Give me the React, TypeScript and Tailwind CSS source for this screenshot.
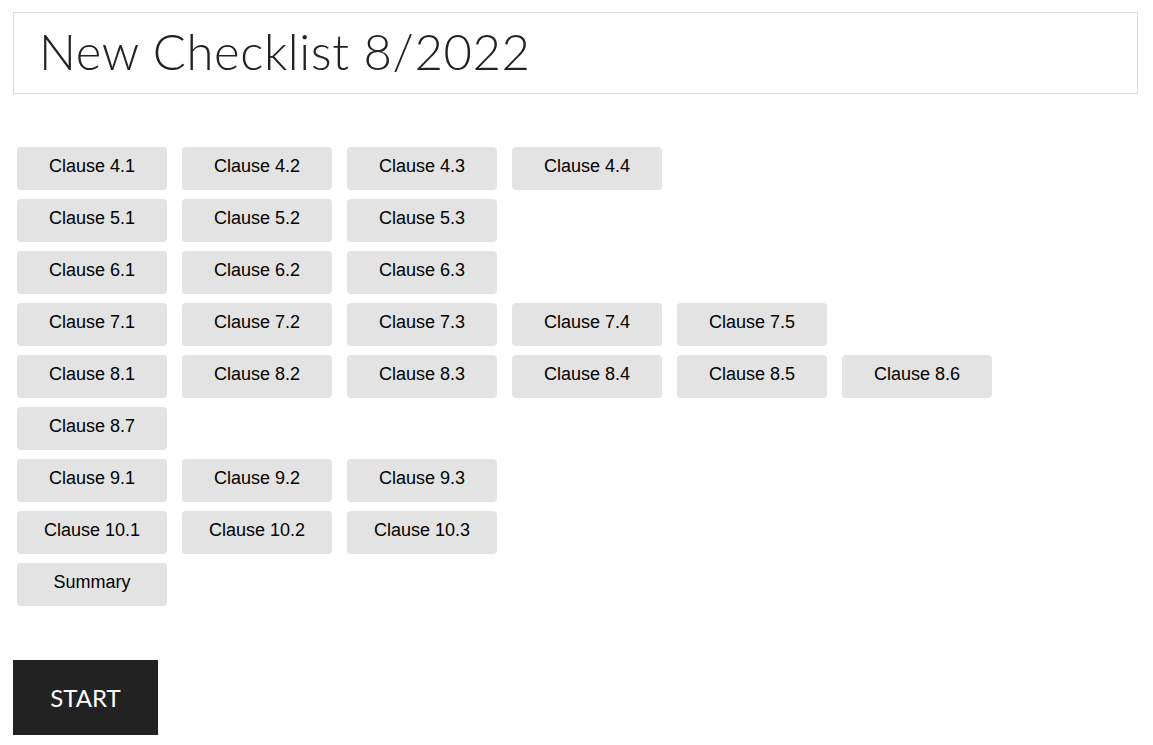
import React from "react";

const rows: string[][] = [
  ["Clause 4.1", "Clause 4.2", "Clause 4.3", "Clause 4.4"],
  ["Clause 5.1", "Clause 5.2", "Clause 5.3"],
  ["Clause 6.1", "Clause 6.2", "Clause 6.3"],
  ["Clause 7.1", "Clause 7.2", "Clause 7.3", "Clause 7.4", "Clause 7.5"],
  ["Clause 8.1", "Clause 8.2", "Clause 8.3", "Clause 8.4", "Clause 8.5", "Clause 8.6", "Clause 8.7"],
  ["Clause 9.1", "Clause 9.2", "Clause 9.3"],
  ["Clause 10.1", "Clause 10.2", "Clause 10.3"],
  ["Summary"],
];

export default function App() {
  return (
    <div className="min-h-screen bg-white pl-[13px] pr-[15px] pt-[12px]" style={{ fontFamily: '"Liberation Sans", Arial, sans-serif' }}>
      <div className="border border-[#dddddd] h-[82px] flex items-center pl-[25px]">
        <h1 className="text-[49px] font-light text-[#222222] leading-none tracking-[0.6px] -mt-[3px]" style={{ fontFamily: 'Lato, "Noto Sans", sans-serif' }}>
          New Checklist 8/2022
        </h1>
      </div>
      <div className="mt-[53px] pl-[4px] pr-[120px] flex flex-col gap-[9px]">
        {rows.map((row, i) => (
          <div key={i} className="flex flex-wrap gap-x-[15px] gap-y-[9px]">
            {row.map((c) => (
              <button
                key={c}
                className="w-[150px] h-[43px] rounded-[4px] bg-[#e3e3e3] text-[18px] text-black flex items-center justify-center pb-[5px]"
              >
                {c}
              </button>
            ))}
          </div>
        ))}
      </div>
      <button
        className="mt-[54px] w-[145px] h-[75px] bg-[#222222] text-white text-[24px] flex items-center justify-center"
        style={{ fontFamily: 'Lato, "Noto Sans", sans-serif' }}
      >
        START
      </button>
    </div>
  );
}
